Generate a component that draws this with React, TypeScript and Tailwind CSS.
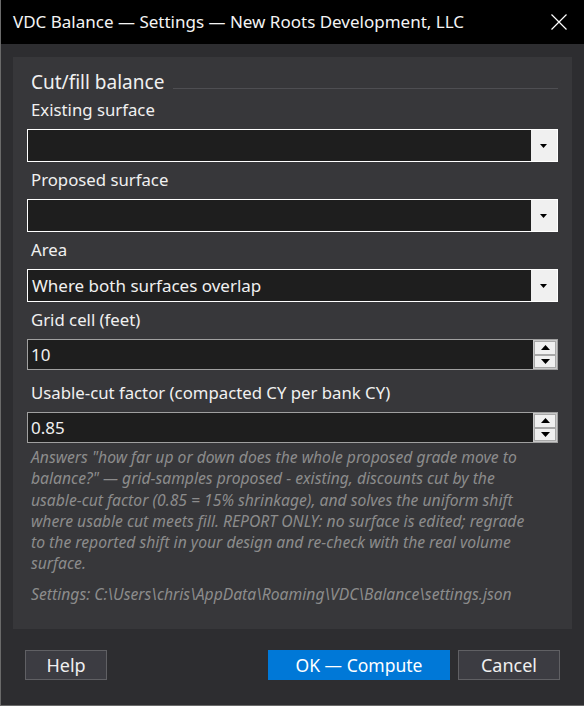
import React from "react";

const helpLines = [
  'Answers "how far up or down does the whole proposed grade move to',
  'balance?" — grid-samples proposed − existing, discounts cut by the',
  "usable-cut factor (0.85 = 15% shrinkage), and solves the uniform shift",
  "where usable cut meets fill. REPORT ONLY: no surface is edited; regrade",
  "to the reported shift in your design and re-check with the real volume",
  "surface.",
];

function ComboBox({ value }: { value?: string }) {
  return (
    <div className="flex h-[33px] border border-white bg-[#1e1e1e]">
      <div className="flex-1 truncate pl-[4px] text-[17px] leading-[31px] text-[#f0f0f0]">
        {value}
      </div>
      <div className="flex w-[26px] items-center justify-center bg-[#f0f0f0]">
        <svg width="8" height="4" viewBox="0 0 8 4">
          <path d="M0 0 H7 L3.5 4 Z" fill="#000" />
        </svg>
      </div>
    </div>
  );
}

function Spinner({ value }: { value: string }) {
  return (
    <div className="flex h-[31px] border border-[#a0a0a0] bg-[#1e1e1e]">
      <div className="flex-1 pl-[3px] text-[17px] leading-[29px] text-[#f0f0f0]">
        {value}
      </div>
      <div className="flex w-[24px] flex-col bg-[#c8c8c8] p-px">
        <div className="flex flex-1 items-center justify-center border border-[#a8a8a8] bg-[#f0f0f0]">
          <svg width="9" height="5" viewBox="0 0 9 5">
            <path d="M4.5 0 L9 5 H0 Z" fill="#000" />
          </svg>
        </div>
        <div className="flex flex-1 items-center justify-center border border-[#a8a8a8] bg-[#f0f0f0]">
          <svg width="9" height="5" viewBox="0 0 9 5">
            <path d="M0 0 H9 L4.5 5 Z" fill="#000" />
          </svg>
        </div>
      </div>
    </div>
  );
}

function Label({ children, className = "" }: { children: React.ReactNode; className?: string }) {
  return (
    <div className={`pl-[4px] pb-[9px] text-[16.75px] leading-[20px] text-[#f0f0f0] ${className}`}>
      {children}
    </div>
  );
}

export default function App() {
  return (
    <div className="flex h-[706px] w-[584px] flex-col border-b border-l border-[#6a6a6a] bg-[#2d2d30] font-['Noto_Sans',sans-serif] antialiased">
      {/* Title bar */}
      <div className="flex h-[44px] items-center justify-between bg-black pl-[12px] pr-[17px]">
        <span className="text-[17px] text-[#f4f4f4]">
          VDC Balance — Settings — New Roots Development, LLC
        </span>
        <svg width="16" height="16" viewBox="0 0 16 16">
          <path d="M0.5 0.5 L15.5 15.5 M15.5 0.5 L0.5 15.5" stroke="#fff" strokeWidth="1.2" />
        </svg>
      </div>

      {/* Body */}
      <div className="px-[12px] pt-[13px]">
        <div className="h-[572px] bg-[#37373a] px-[14px] pt-[13px]">
          <div className="flex h-[24px] items-center">
            <span className="pl-[4px] pr-[9px] text-[19px] leading-[24px] text-[#f0f0f0]">
              Cut/fill balance
            </span>
            <div className="mt-[13px] h-px flex-1 bg-[#4e4e52]" />
          </div>

          <Label className="mt-[6px]">Existing surface</Label>
          <ComboBox />

          <Label className="mt-[8px]">Proposed surface</Label>
          <ComboBox />

          <Label className="mt-[8px]">Area</Label>
          <ComboBox value="Where both surfaces overlap" />

          <Label className="mt-[8px]">Grid cell (feet)</Label>
          <Spinner value="10" />

          <Label className="mt-[13px]">Usable-cut factor (compacted CY per bank CY)</Label>
          <Spinner value="0.85" />

          <div className="mt-[4px] pl-[4px] text-[15.7px] italic leading-[21.3px] text-[#8c8c8c]">
            {helpLines.map((line) => (
              <div key={line} className="whitespace-nowrap">
                {line}
              </div>
            ))}
            <div className="mt-[9px] whitespace-nowrap">
              Settings: C:\Users\chris\AppData\Roaming\VDC\Balance\settings.json
            </div>
          </div>
        </div>
      </div>

      {/* Buttons */}
      <div className="mt-[21px] flex items-center px-[24px]">
        <button className="h-[30px] w-[82px] border border-[#606064] bg-[#3c3c42] text-[18px] text-[#f0f0f0]">
          Help
        </button>
        <div className="flex-1" />
        <button className="h-[30px] w-[182px] bg-[#0078d7] text-[17.5px] text-white">
          OK — Compute
        </button>
        <button className="ml-[8px] h-[30px] w-[102px] border border-[#606064] bg-[#3c3c42] text-[18px] text-[#f0f0f0]">
          Cancel
        </button>
      </div>
    </div>
  );
}
